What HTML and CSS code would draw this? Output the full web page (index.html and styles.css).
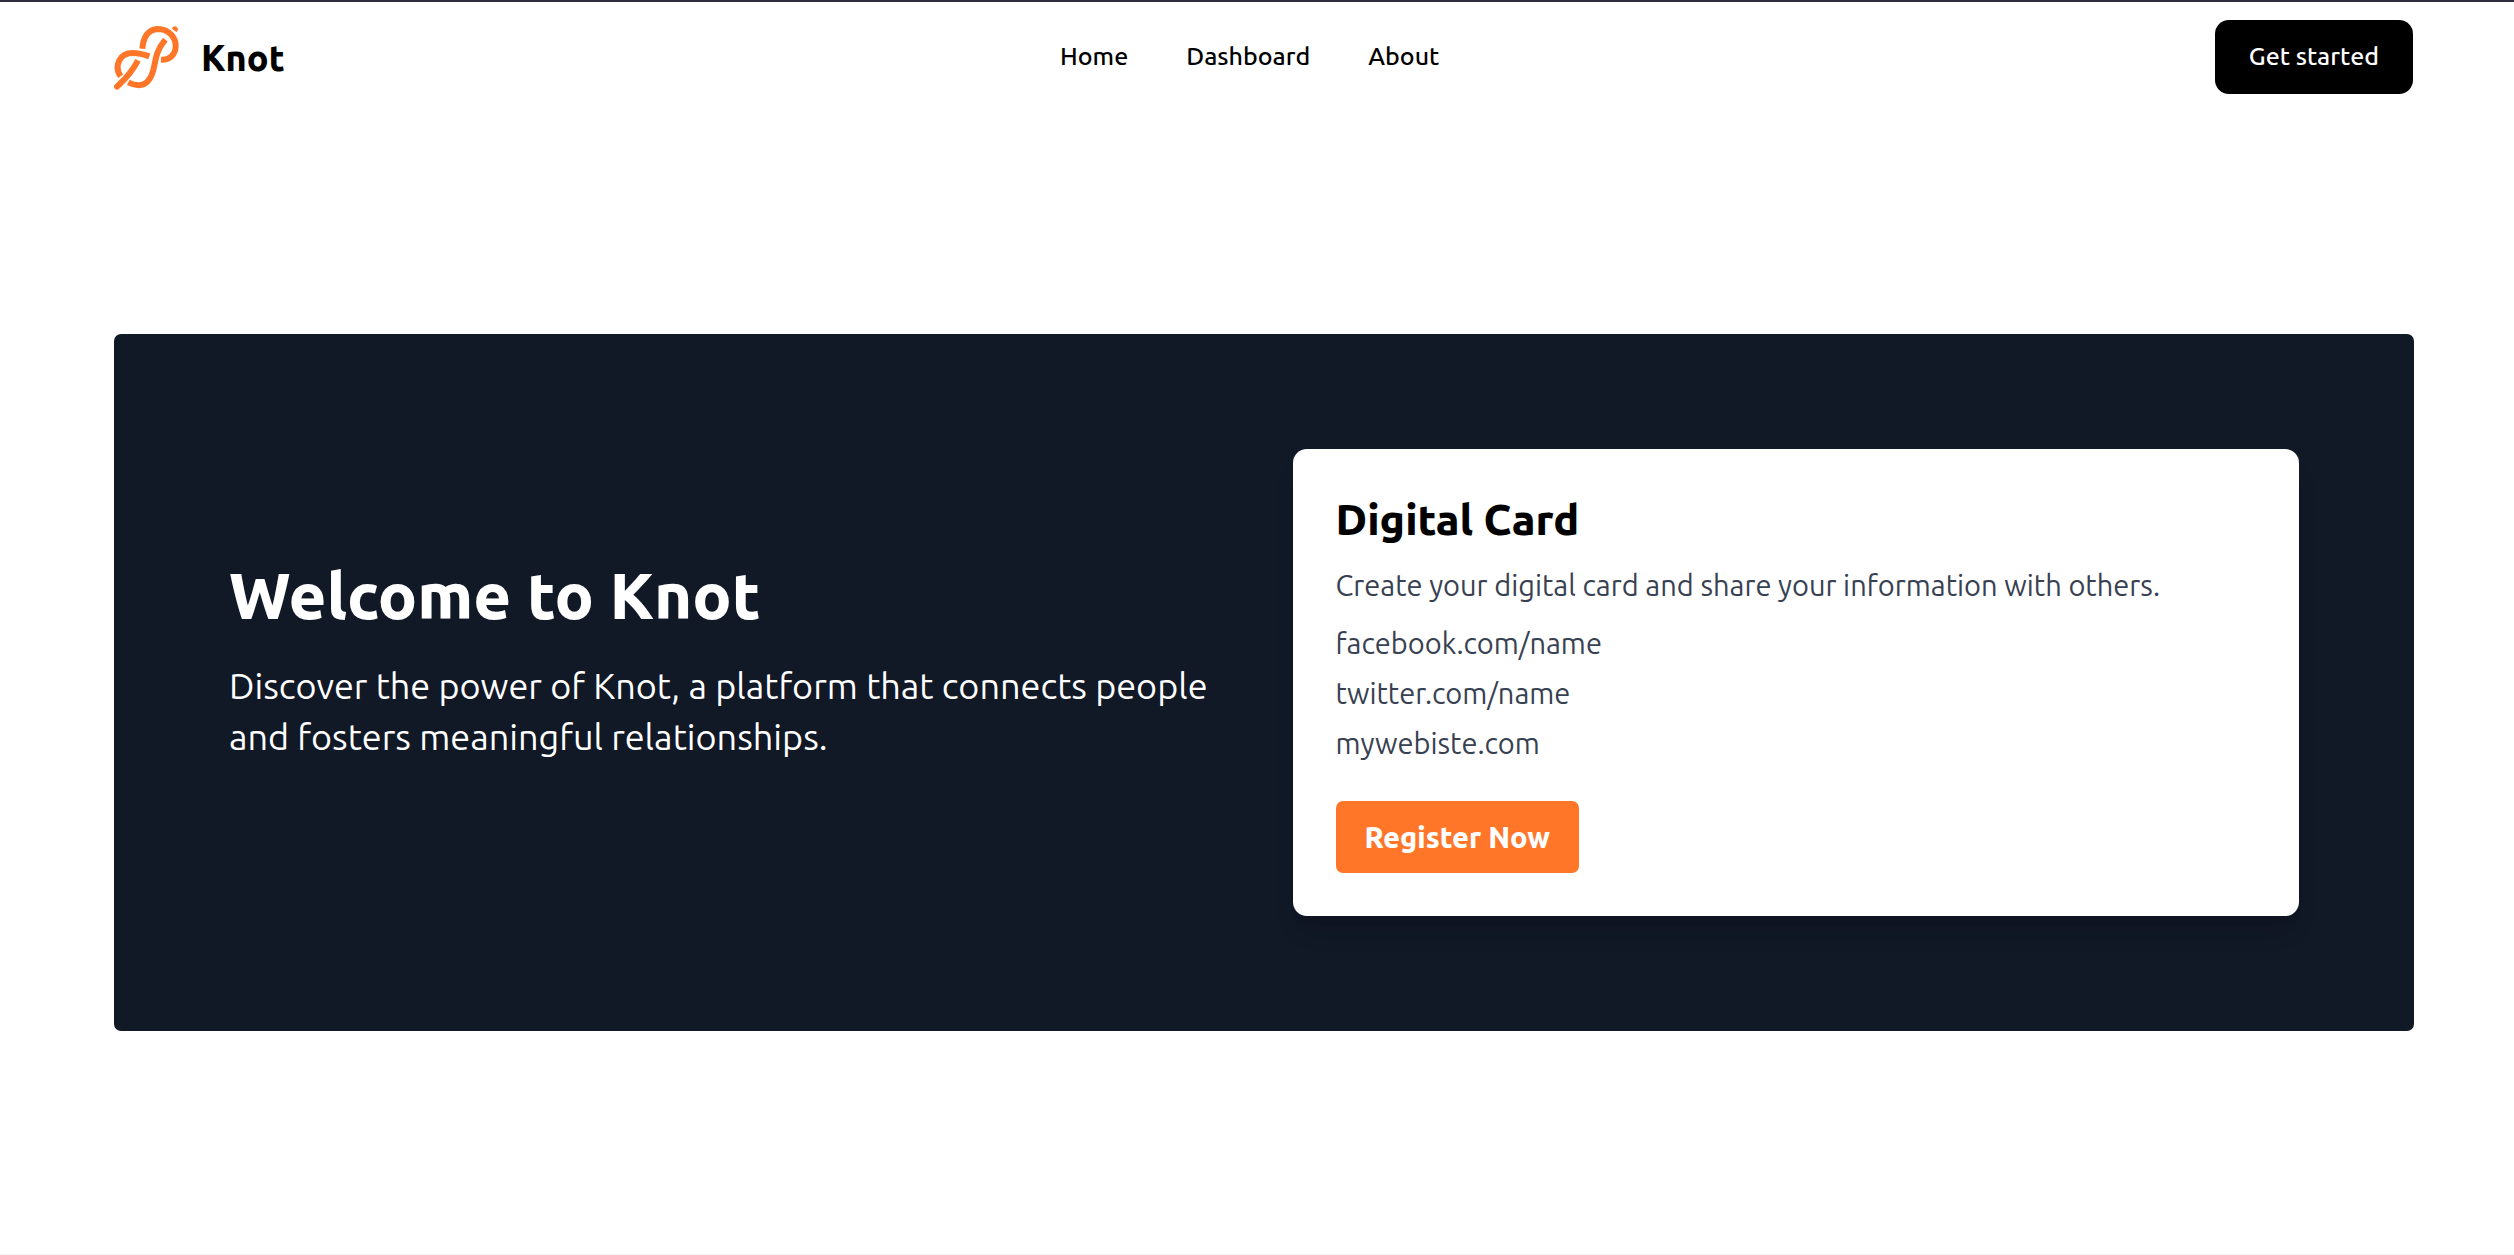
FILE: index.html
```html
<!DOCTYPE html>
<html lang="en">
<head>
  <meta charset="utf-8">
  <meta name="viewport" content="width=device-width, initial-scale=1">
  <title>Knot</title>
  <link rel="stylesheet" href="styles.css">
</head>
<body>
  <header class="header">
    <a class="brand" href="#">
      <svg class="brand-mark" viewBox="42 72 195 195" aria-hidden="true">
        <g fill="none" stroke="currentColor" stroke-width="18">
          <path d="M127 143C130 108 143 86 173 84C205 84 228 108 227 137C226 162 208 177 183 176"/>
          <path d="M196 116C152 168 174 206 144 240C128 258 104 254 85 244"/>
          <path d="M148 166C108 152 72 150 58 178C49 196 52 212 62 226"/>
          <path d="M114 178C100 205 80 230 56 252"/>
          <path d="M56 252L51 257" stroke-linecap="round"/>
        </g>
        <path d="M216 83A9 9 0 1 1 229 93Z" fill="currentColor"/>
      </svg>
      <span class="brand-name">Knot</span>
    </a>
    <nav class="nav" aria-label="Main">
      <a href="#">Home</a>
      <a href="#">Dashboard</a>
      <a href="#">About</a>
    </nav>
    <button class="start-button" type="button">Get started</button>
  </header>
  <main class="main">
    <section class="hero">
      <div class="intro">
        <h1>Welcome to Knot</h1>
        <p>Discover the power of Knot, a platform that connects people and fosters meaningful relationships.</p>
      </div>
      <article class="card">
        <h2>Digital Card</h2>
        <p>Create your digital card and share your information with others.</p>
        <ul class="card-links">
          <li>facebook.com/name</li>
          <li>twitter.com/name</li>
          <li>mywebiste.com</li>
        </ul>
        <button class="register-button" type="button">Register Now</button>
      </article>
    </section>
  </main>
</body>
</html>
```

FILE: styles.css
```css
*, *::before, *::after {
  box-sizing: border-box;
}

body, h1, h2, p, ul {
  margin: 0;
}

body {
  display: flex;
  flex-direction: column;
  min-height: 100vh;
  border-top: 2px solid #2f2e40;
  border-bottom: 1px solid #f3f4f6;
  background: #fff;
  color: #000;
  font-family: Ubuntu, "Noto Sans", sans-serif;
  font-size: 29px;
  line-height: 43px;
}

a {
  color: inherit;
  text-decoration: none;
}

button {
  border: 0;
  font: inherit;
  color: #fff;
  cursor: pointer;
}

.header {
  display: flex;
  align-items: center;
  justify-content: space-between;
  padding: 18px 101px 18px 114px;
}

.brand {
  display: flex;
  align-items: center;
  gap: 22px;
}

.brand-mark {
  width: 65px;
  height: 65px;
  color: #ff7629;
}

.brand-name {
  font-size: 36px;
  font-weight: 800;
}

.nav {
  display: flex;
  gap: 58px;
  padding-bottom: 2px;
  font-size: 25px;
  font-weight: 500;
}

.start-button {
  padding: 14px 34px 16px;
  border-radius: 14px;
  background: #000;
  font-size: 25px;
  font-weight: 500;
  line-height: 44px;
}

.main {
  display: flex;
  flex: 1;
  flex-direction: column;
  justify-content: center;
  padding: 0 100px 2px 114px;
}

.hero {
  display: grid;
  grid-template-columns: 1fr 1fr;
  align-items: center;
  gap: 57px;
  padding: 115px;
  border-radius: 7px;
  background: #111826;
}

.intro {
  padding-bottom: 43px;
  color: #fff;
}

.intro h1 {
  margin-bottom: 29px;
  font-size: 65px;
  font-weight: 800;
  line-height: 72px;
}

.intro p {
  font-size: 36px;
  line-height: 51px;
}

.card {
  padding: 43px;
  border-radius: 14px;
  background: #fff;
  box-shadow: 0 20px 25px -5px rgb(0 0 0 / 10%), 0 8px 10px -6px rgb(0 0 0 / 10%);
  color: #374151;
}

.card h2 {
  margin-bottom: 18px;
  color: #000;
  font-size: 43px;
  font-weight: 800;
  line-height: 54px;
}

.card-links {
  display: grid;
  gap: 7px;
  margin: 15px 0 36px;
  padding: 0;
  list-style: none;
}

.register-button {
  padding: 14px 29px;
  border-radius: 7px;
  background: #ff7629;
  font-weight: 800;
  line-height: 44px;
}
```
